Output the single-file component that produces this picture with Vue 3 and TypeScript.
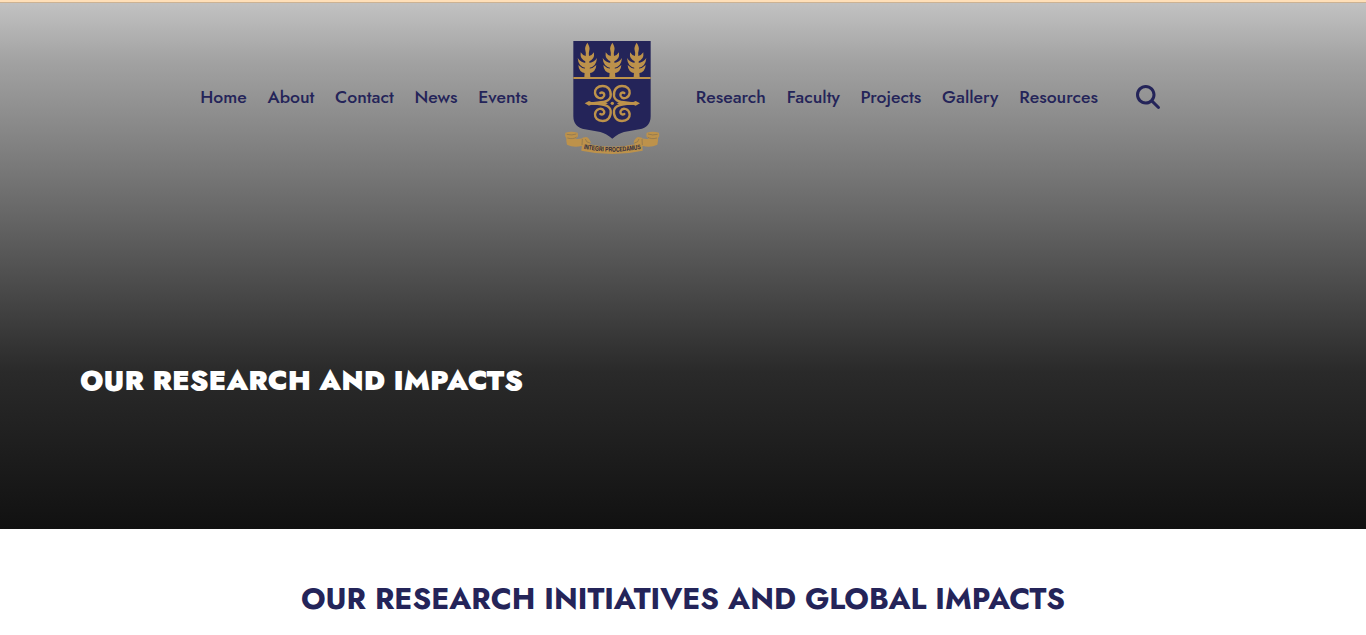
<script setup lang="ts">
const leftLinks: string[] = ['Home', 'About', 'Contact', 'News', 'Events']
const rightLinks: string[] = ['Research', 'Faculty', 'Projects', 'Gallery', 'Resources']
const trees: number[] = [82, 157, 230]
</script>

<template>
  <div class="page">
    <div class="topbar"></div>
    <header class="hero">
      <nav class="nav">
        <div class="links left">
          <a v-for="l in leftLinks" :key="l" class="link">{{ l }}</a>
        </div>
        <svg class="crest" viewBox="0 0 312 366" role="img" aria-label="University crest">
          <path fill="#242459" d="M40 15H272V240Q272 274 238 280L192 288Q176 292 157 308Q137 292 121 288L75 280Q40 274 40 240Z" />
          <path fill="#bd924b" d="M40 123H272V129H40Z" />
          <g v-for="x in trees" :key="x" :transform="`translate(${x} 0)`">
            <path fill="#bd924b" d="M0 20Q-9 34 -6 43Q-4 48 -5 60L-9 124H9L5 60Q4 48 6 43Q9 34 0 20Z" />
            <path fill="#bd924b" d="M-20 49Q-14 59 -3 61V77Q-23 72 -20 49ZM20 49Q14 59 3 61V77Q23 72 20 49Z" />
            <path fill="#bd924b" d="M-29 66Q-20 79 -4 81V96Q-27 93 -29 66ZM29 66Q20 79 4 81V96Q27 93 29 66Z" />
            <path fill="#bd924b" d="M-27 87Q-18 97 -5 98V112Q-26 109 -27 87ZM27 87Q18 97 5 98V112Q26 109 27 87Z" />
          </g>
          <g fill="none" stroke="#bd924b" stroke-width="7" stroke-linecap="round">
            <path d="M92 202C125 199 149 199 152 180C154 161 143 150 128 150C112 150 104 160 105 171C107 187 126 192 132 180C135 172 127 167 121 171" />
            <path d="M222 202C189 199 165 199 162 180C160 161 171 150 186 150C202 150 210 160 209 171C207 187 188 192 182 180C179 172 187 167 193 171" />
            <path d="M92 202C125 205 149 205 152 224C154 243 143 255 128 255C112 255 104 245 105 234C107 218 126 213 132 225C135 233 127 238 121 234" />
            <path d="M222 202C189 205 165 205 162 224C160 243 171 255 186 255C202 255 210 245 209 234C207 218 188 213 182 225C179 233 187 238 193 234" />
          </g>
          <path fill="#bd924b" d="M74 202L87 195L94 198L134 197L144 202L134 207L94 206L87 209ZM240 202L227 195L220 198L180 197L170 202L180 207L220 206L227 209Z" />
          <circle cx="157" cy="202" r="5" fill="#bd924b" />
          <g fill="#bd924b">
            <path d="M16 290Q34 284 53 290Q57 305 45 308Q60 311 78 303Q88 305 92 319L88 325L67 329Q42 337 21 326Q18 312 19 307Q13 300 16 290Z" />
            <path d="M297 290Q279 284 260 290Q256 305 268 308Q253 311 235 303Q225 305 221 319L225 325L246 329Q271 337 292 326Q295 312 294 307Q300 300 297 290Z" />
            <path d="M68 305Q83 303 92 319L88 325Q157 340 225 325L221 319Q230 303 246 305L248 344Q157 364 64 344Z" />
          </g>
          <g fill="none" stroke="#7d6d50" stroke-width="1.8">
            <path d="M20 295Q36 299 49 294M22 306Q40 311 50 303M67 309L66 327M76 309Q78 320 90 321" />
            <path d="M293 295Q277 299 264 294M291 306Q273 311 263 303M246 309L247 327M237 309Q235 320 223 321" />
          </g>
          <path id="motto-curve" fill="none" d="M71 338Q157 356 245 338" />
          <text class="motto"><textPath href="#motto-curve" textLength="173" lengthAdjust="spacingAndGlyphs">INTEGRI PROCEDAMUS</textPath></text>
        </svg>
        <div class="links right">
          <a v-for="l in rightLinks" :key="l" class="link">{{ l }}</a>
        </div>
        <svg class="search" viewBox="0 0 512 512" role="img" aria-label="Search">
          <path fill="#242459" d="M416 208c0 45.900-14.900 88.300-40 122.700L502.600 457.400c12.500 12.500 12.500 32.800 0 45.300s-32.800 12.500-45.300 0L330.700 376c-34.400 25.200-76.800 40-122.700 40C93.100 416 0 322.900 0 208S93.100 0 208 0S416 93.100 416 208zM208 352a144 144 0 1 0 0-288 144 144 0 1 0 0 288z" />
        </svg>
      </nav>
      <h1 class="title">OUR RESEARCH AND IMPACTS</h1>
    </header>
    <main class="content">
      <h2 class="subtitle">OUR RESEARCH INITIATIVES AND GLOBAL IMPACTS</h2>
    </main>
  </div>
</template>

<style>
body {
  margin: 0;
  background: #fff;
  overflow: hidden;
}
</style>

<style scoped>
.page {
  height: 635px;
  overflow: hidden;
  font-family: "Jost", "Lato", sans-serif;
}
.topbar {
  box-sizing: border-box;
  height: 3px;
  background: #ffdfb8;
  border-bottom: 1px solid #ccb293;
}
.hero {
  height: 526px;
  background: linear-gradient(180deg, #c2c2c2 0%, #a2a2a2 11%, #2a2a2a 70%, #111 100%);
}
.nav {
  display: flex;
  align-items: center;
  height: 188px;
  padding-left: 200.2px;
}
.links {
  display: flex;
  flex: none;
  gap: 20.8px;
}
.left {
  width: 329.8px;
}
.right {
  width: 402px;
}
.link {
  color: #242459;
  font-size: 17.6px;
  font-weight: 500;
  line-height: 26px;
  white-space: nowrap;
}
.crest {
  flex: none;
  width: 104px;
  height: 122px;
  margin: 0 31.8px 0 30px;
}
.motto {
  fill: #292743;
  font-family: "Liberation Sans", Arial, sans-serif;
  font-size: 20px;
  font-weight: 700;
}
.search {
  flex: none;
  width: 24px;
  height: 24px;
  margin-left: 38.2px;
}
.title {
  margin: 170px 0 0 80px;
  color: #fff;
  font-size: 28px;
  line-height: 40px;
  font-weight: 900;
  white-space: nowrap;
}
.subtitle {
  margin: 0;
  padding-top: 50px;
  color: #242459;
  font-size: 30px;
  line-height: 40px;
  font-weight: 700;
  text-align: center;
  white-space: nowrap;
}
</style>
